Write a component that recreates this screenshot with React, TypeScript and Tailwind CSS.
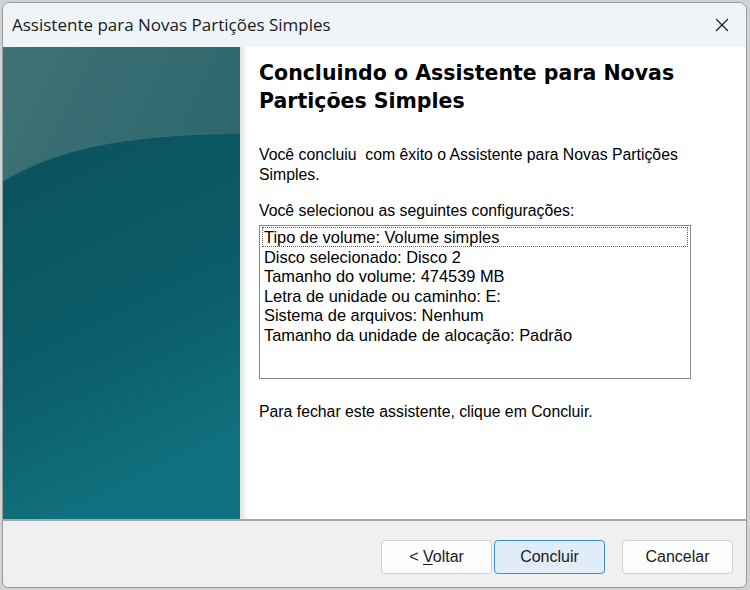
import { X } from 'lucide-react';

const settings = [
  'Tipo de volume: Volume simples',
  'Disco selecionado: Disco 2',
  'Tamanho do volume: 474539 MB',
  'Letra de unidade ou caminho: E:',
  'Sistema de arquivos: Nenhum',
  'Tamanho da unidade de alocação: Padrão',
];

function SidePanel() {
  return (
    <svg width="237" height="472" viewBox="0 0 237 472" className="block">
      <defs>
        <linearGradient id="upper" x1="0" y1="0" x2="1" y2="1">
          <stop offset="0" stopColor="#3e7275" />
          <stop offset="1" stopColor="#215f68" />
        </linearGradient>
        <linearGradient id="lower" x1="0" y1="0" x2="0.3" y2="1">
          <stop offset="0" stopColor="#09525d" />
          <stop offset="0.6" stopColor="#0c5c69" />
          <stop offset="1" stopColor="#11717e" />
        </linearGradient>
      </defs>
      <rect width="237" height="472" fill="url(#upper)" />
      <path d="M0 134 C 50 104, 110 88, 237 86 L237 472 L0 472 Z" fill="url(#lower)" />
      <path d="M0 134 C 50 104, 110 88, 237 86" fill="none" stroke="#36707a" strokeWidth="1.2" />
    </svg>
  );
}

export default function App() {
  return (
    <div className="w-[750px] h-[590px] bg-[#cfd3d6] p-[2px] pr-[3px] pb-[2px]">
      <div
        className="w-[745px] h-[586px] rounded-t-[8px] rounded-b-[6px] overflow-hidden border border-[#9a9a9a] flex flex-col bg-[#f0f0f0]"
        style={{ fontFamily: 'Arial' }}
      >
        {/* title bar */}
        <div className="h-[44px] flex items-center bg-[#eff4f9] shrink-0">
          <span
            className="pl-[9px] text-[17px] text-[#1a1a1a]"
            style={{ fontFamily: '"Open Sans", "Noto Sans", sans-serif' }}
          >
            Assistente para Novas Partições Simples
          </span>
          <div className="ml-auto w-[46px] flex justify-center pr-[2px]">
            <X size={22} strokeWidth={1.3} className="text-[#1a1a1a]" />
          </div>
        </div>

        {/* body */}
        <div className="h-[472px] flex shrink-0">
          <SidePanel />
          <div className="w-[8px] bg-gradient-to-r from-[#e2e2e2] to-white" />
          <div
            className="flex-1 bg-white pl-[11px] pt-[12px]"
            style={{ fontFamily: '"Liberation Sans", Arial, sans-serif' }}
          >
            <h1
              className="text-[20.5px] leading-[28px] font-bold text-black"
              style={{ fontFamily: '"DejaVu Sans", Verdana, sans-serif' }}
            >
              Concluindo o Assistente para Novas
              <br />
              Partições Simples
            </h1>
            <p className="mt-[30px] text-[15.8px] leading-[20px] text-black whitespace-pre">
              {'Você concluiu  com êxito o Assistente para Novas Partições\nSimples.'}
            </p>
            <p className="mt-[16px] text-[15.8px] leading-[20px] text-black">
              Você selecionou as seguintes configurações:
            </p>
            <div className="mt-[4px] w-[432px] h-[154px] border border-[#828790] bg-white pt-[1px] px-[2px]">
              {settings.map((s, i) => (
                <div
                  key={i}
                  className={
                    'h-[19.5px] leading-[18px] pl-[1px] text-[16.4px] text-black whitespace-nowrap ' +
                    (i === 0 ? 'border border-dotted border-[#606060]' : 'border border-transparent')
                  }
                >
                  {s}
                </div>
              ))}
            </div>
            <p className="mt-[23px] text-[15.8px] leading-[20px] text-black">
              Para fechar este assistente, clique em Concluir.
            </p>
          </div>
        </div>

        {/* footer */}
        <div
          className="flex-1 border-t-2 border-[#a8a8a8] flex items-start justify-end pt-[19px] pr-[13px]"
          style={{ fontFamily: '"Liberation Sans", Arial, sans-serif' }}
        >
          <button className="w-[111px] h-[34px] rounded-[4px] border border-[#d0d0d0] bg-[#fdfdfd] text-[16px] text-[#1a1a1a]">
            &lt; <span className="underline underline-offset-2">V</span>oltar
          </button>
          <button className="ml-[2px] w-[111px] h-[34px] rounded-[4px] border border-[#3a8fd8] bg-[#e0ecf8] text-[16px] text-[#1a1a1a]">
            Concluir
          </button>
          <button className="ml-[17px] w-[111px] h-[34px] rounded-[4px] border border-[#d0d0d0] bg-[#fdfdfd] text-[16px] text-[#1a1a1a]">
            Cancelar
          </button>
        </div>
      </div>
    </div>
  );
}
